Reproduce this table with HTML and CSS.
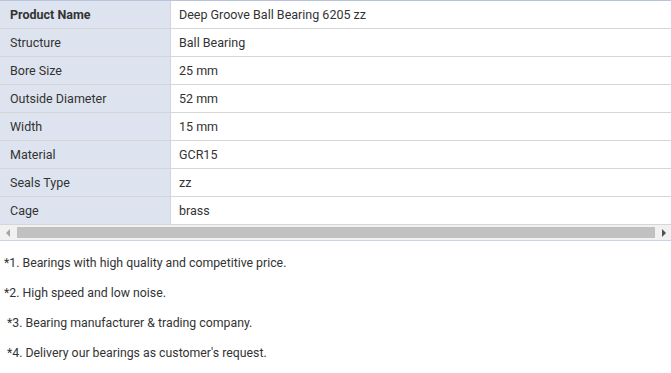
FILE: index.html
```html
<!DOCTYPE html>
<html>
<head>
<meta charset="utf-8">
<link rel="stylesheet" href="styles.css">
</head>
<body>
<div class="spec-wrap">
  <table class="spec">
    <tr><th class="label strong">Product Name</th><td>Deep Groove Ball Bearing 6205 zz</td></tr>
    <tr><th class="label">Structure</th><td>Ball Bearing</td></tr>
    <tr><th class="label">Bore Size</th><td>25 mm</td></tr>
    <tr><th class="label">Outside Diameter</th><td>52 mm</td></tr>
    <tr><th class="label">Width</th><td>15 mm</td></tr>
    <tr><th class="label">Material</th><td>GCR15</td></tr>
    <tr><th class="label">Seals Type</th><td>zz</td></tr>
    <tr><th class="label">Cage</th><td>brass</td></tr>
  </table>
  <div class="hscroll">
    <div class="arrow arrow-left"></div>
    <div class="track"><div class="thumb"></div></div>
    <div class="arrow arrow-right"></div>
  </div>
</div>
<div class="notes">
  <p class="note">*1. Bearings with high quality and competitive price.</p>
  <p class="note">*2. High speed and low noise.</p>
  <p class="note indent">*3. Bearing manufacturer &amp; trading company.</p>
  <p class="note indent">*4. Delivery our bearings as customer's request.</p>
</div>
</body>
</html>
```
FILE: styles.css
```css
html, body {
  margin: 0;
  padding: 0;
  background: #fff;
}
body {
  font-family: Roboto, "Liberation Sans", Arial, sans-serif;
  color: #333;
}
.spec-wrap {
  width: 671px;
  overflow: hidden;
  border-top: 1px solid #b7c4d9;
  border-bottom: 1px solid #c9d3e3;
}
.spec {
  border-collapse: collapse;
  width: 676px;
  font-size: 12.5px;
}
.spec th, .spec td {
  height: 27px;
  padding: 0 8px;
  border: 1px solid #d6d6d6;
  text-align: left;
  font-weight: normal;
  white-space: nowrap;
}
.spec tr:first-child th, .spec tr:first-child td { border-top: none; }
.spec th:first-child { border-left: none; }
.spec .label {
  width: 152px;
  background: #dde4ef;
  padding-left: 10px;
}
.spec .strong { font-weight: bold; }

.hscroll {
  display: flex;
  height: 15px;
  background: #f1f1f1;
}
.arrow {
  width: 15px;
  flex: none;
  display: flex;
  align-items: center;
  justify-content: center;
}
.arrow::before {
  content: "";
  width: 0;
  height: 0;
  border-top: 4px solid transparent;
  border-bottom: 4px solid transparent;
}
.arrow-left::before { border-right: 4px solid #a3a3a3; }
.arrow-right::before { border-left: 4px solid #505050; }
.track {
  flex: 1;
  display: flex;
  align-items: center;
  padding: 0 1px 0 2px;
}
.thumb {
  flex: 1;
  height: 11px;
  background: #c1c1c1;
}

.notes {
  padding-top: 12px;
  font-size: 12.3px;
}
.note {
  margin: 0;
  height: 30px;
  line-height: 20px;
  padding-left: 4px;
}
.note.indent { padding-left: 7px; }
```
